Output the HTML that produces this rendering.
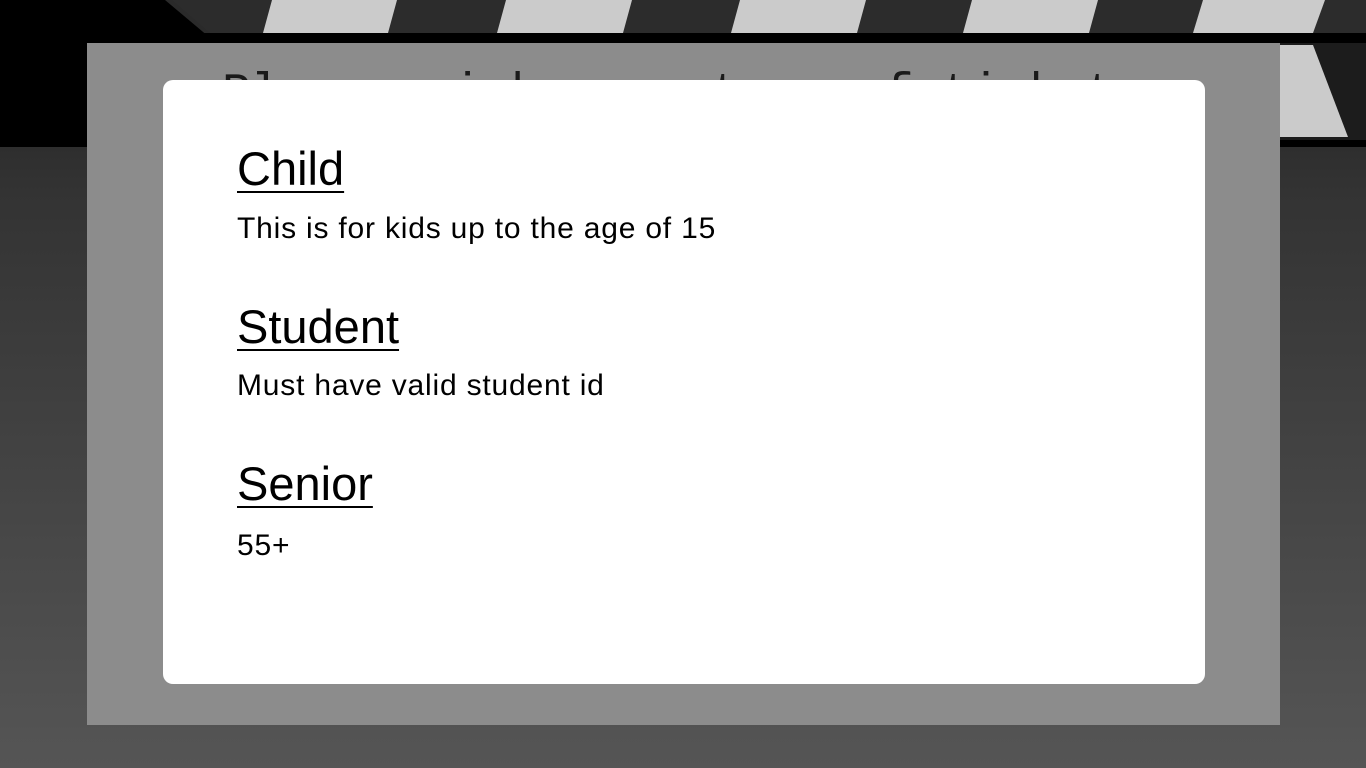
<!DOCTYPE html>
<html><head><meta charset="utf-8"><style>
html,body{margin:0;padding:0;width:1366px;height:768px;overflow:hidden;background:#3c3c3c;}
.bg{position:absolute;left:0;top:0;}
.panel{position:absolute;left:87px;top:43px;width:1193px;height:682px;background:#8c8c8c;overflow:hidden;}
.title{position:absolute;left:135px;top:24px;font-family:"Liberation Mono",monospace;font-size:48px;color:#1a1a1a;white-space:nowrap;}
.card{position:absolute;left:163px;top:80px;width:1042px;height:604px;background:#fff;border-radius:10px;font-family:"Liberation Sans",sans-serif;color:#000;}
.h{position:absolute;left:74px;font-size:47px;text-decoration:underline;text-decoration-thickness:2px;text-underline-offset:6px;line-height:1;}
.p{position:absolute;left:74px;font-size:30px;letter-spacing:0.8px;line-height:1;}
</style></head><body>
<svg class="bg" width="1366" height="768" viewBox="0 0 1366 768">
<defs>
<linearGradient id="g" x1="0" y1="0" x2="0" y2="1">
<stop offset="0" stop-color="#1e1e1e"/><stop offset="0.25" stop-color="#333"/><stop offset="1" stop-color="#555"/>
</linearGradient>
</defs>
<rect x="0" y="0" width="1366" height="768" fill="url(#g)"/>
<rect x="0" y="0" width="1366" height="33" fill="#2a2a2a"/>
<polygon points="0,0 165,0 215,42 1366,42 1366,147 0,147" fill="#000"/>
<polygon points="1280,43 1366,43 1366,140 1280,140" fill="#1c1c1c"/>
<polygon points="172,0 1366,0 1366,33 210,33" fill="#2c2c2c"/>
<g fill="#cbcbcb">
<polygon points="272,0 397,0 388,33 263,33"/>
<polygon points="506,0 632,0 623,33 497,33"/>
<polygon points="740,0 866,0 857,33 731,33"/>
<polygon points="972,0 1098,0 1089,33 963,33"/>
<polygon points="1203,0 1325,0 1313,33 1193,33"/>
<polygon points="1280,45 1313,45 1348,137 1280,137"/>
</g>
<rect x="0" y="33" width="1366" height="10" fill="#000"/>
</svg>
<div class="panel"><div class="title">Please pick your type of ticket</div></div>
<div class="card">
<div class="h" style="top:65px">Child</div>
<div class="p" style="top:134px">This is for kids up to the age of 15</div>
<div class="h" style="top:223px">Student</div>
<div class="p" style="top:291px">Must have valid student id</div>
<div class="h" style="top:380px">Senior</div>
<div class="p" style="top:451px">55+</div>
</div>
</body></html>
